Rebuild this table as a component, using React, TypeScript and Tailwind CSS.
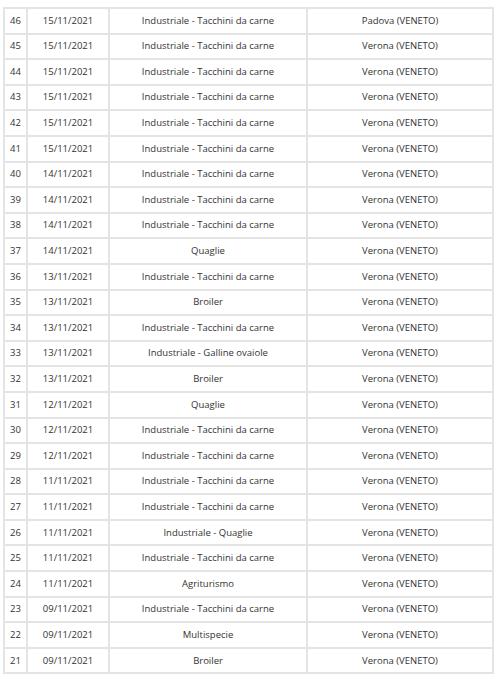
const rows: [number, string, string, string][] = [
  [46, "15/11/2021", "Industriale - Tacchini da carne", "Padova (VENETO)"],
  [45, "15/11/2021", "Industriale - Tacchini da carne", "Verona (VENETO)"],
  [44, "15/11/2021", "Industriale - Tacchini da carne", "Verona (VENETO)"],
  [43, "15/11/2021", "Industriale - Tacchini da carne", "Verona (VENETO)"],
  [42, "15/11/2021", "Industriale - Tacchini da carne", "Verona (VENETO)"],
  [41, "15/11/2021", "Industriale - Tacchini da carne", "Verona (VENETO)"],
  [40, "14/11/2021", "Industriale - Tacchini da carne", "Verona (VENETO)"],
  [39, "14/11/2021", "Industriale - Tacchini da carne", "Verona (VENETO)"],
  [38, "14/11/2021", "Industriale - Tacchini da carne", "Verona (VENETO)"],
  [37, "14/11/2021", "Quaglie", "Verona (VENETO)"],
  [36, "13/11/2021", "Industriale - Tacchini da carne", "Verona (VENETO)"],
  [35, "13/11/2021", "Broiler", "Verona (VENETO)"],
  [34, "13/11/2021", "Industriale - Tacchini da carne", "Verona (VENETO)"],
  [33, "13/11/2021", "Industriale - Galline ovaiole", "Verona (VENETO)"],
  [32, "13/11/2021", "Broiler", "Verona (VENETO)"],
  [31, "12/11/2021", "Quaglie", "Verona (VENETO)"],
  [30, "12/11/2021", "Industriale - Tacchini da carne", "Verona (VENETO)"],
  [29, "12/11/2021", "Industriale - Tacchini da carne", "Verona (VENETO)"],
  [28, "11/11/2021", "Industriale - Tacchini da carne", "Verona (VENETO)"],
  [27, "11/11/2021", "Industriale - Tacchini da carne", "Verona (VENETO)"],
  [26, "11/11/2021", "Industriale - Quaglie", "Verona (VENETO)"],
  [25, "11/11/2021", "Industriale - Tacchini da carne", "Verona (VENETO)"],
  [24, "11/11/2021", "Agriturismo", "Verona (VENETO)"],
  [23, "09/11/2021", "Industriale - Tacchini da carne", "Verona (VENETO)"],
  [22, "09/11/2021", "Multispecie", "Verona (VENETO)"],
  [21, "09/11/2021", "Broiler", "Verona (VENETO)"],
]

const cell = "border-2 border-[#e4e4e4] text-center align-middle p-0"

export default function App() {
  return (
    <div className="w-[499px] h-[680px] bg-white pt-[7px] pl-[3px] font-['Open_Sans',Arial,sans-serif] text-[9.5px] text-[#333]">
      <table className="border-collapse w-[489px] table-fixed">
        <colgroup>
          <col className="w-[23px]" />
          <col className="w-[82px]" />
          <col className="w-[198px]" />
          <col className="w-[186px]" />
        </colgroup>
        <tbody>
          {rows.map(([id, date, type, place]) => (
            <tr key={id} className="h-[25.6px]">
              <td className={cell}>{id}</td>
              <td className={cell}>{date}</td>
              <td className={cell}>{type}</td>
              <td className={cell}>{place}</td>
            </tr>
          ))}
        </tbody>
      </table>
    </div>
  )
}
